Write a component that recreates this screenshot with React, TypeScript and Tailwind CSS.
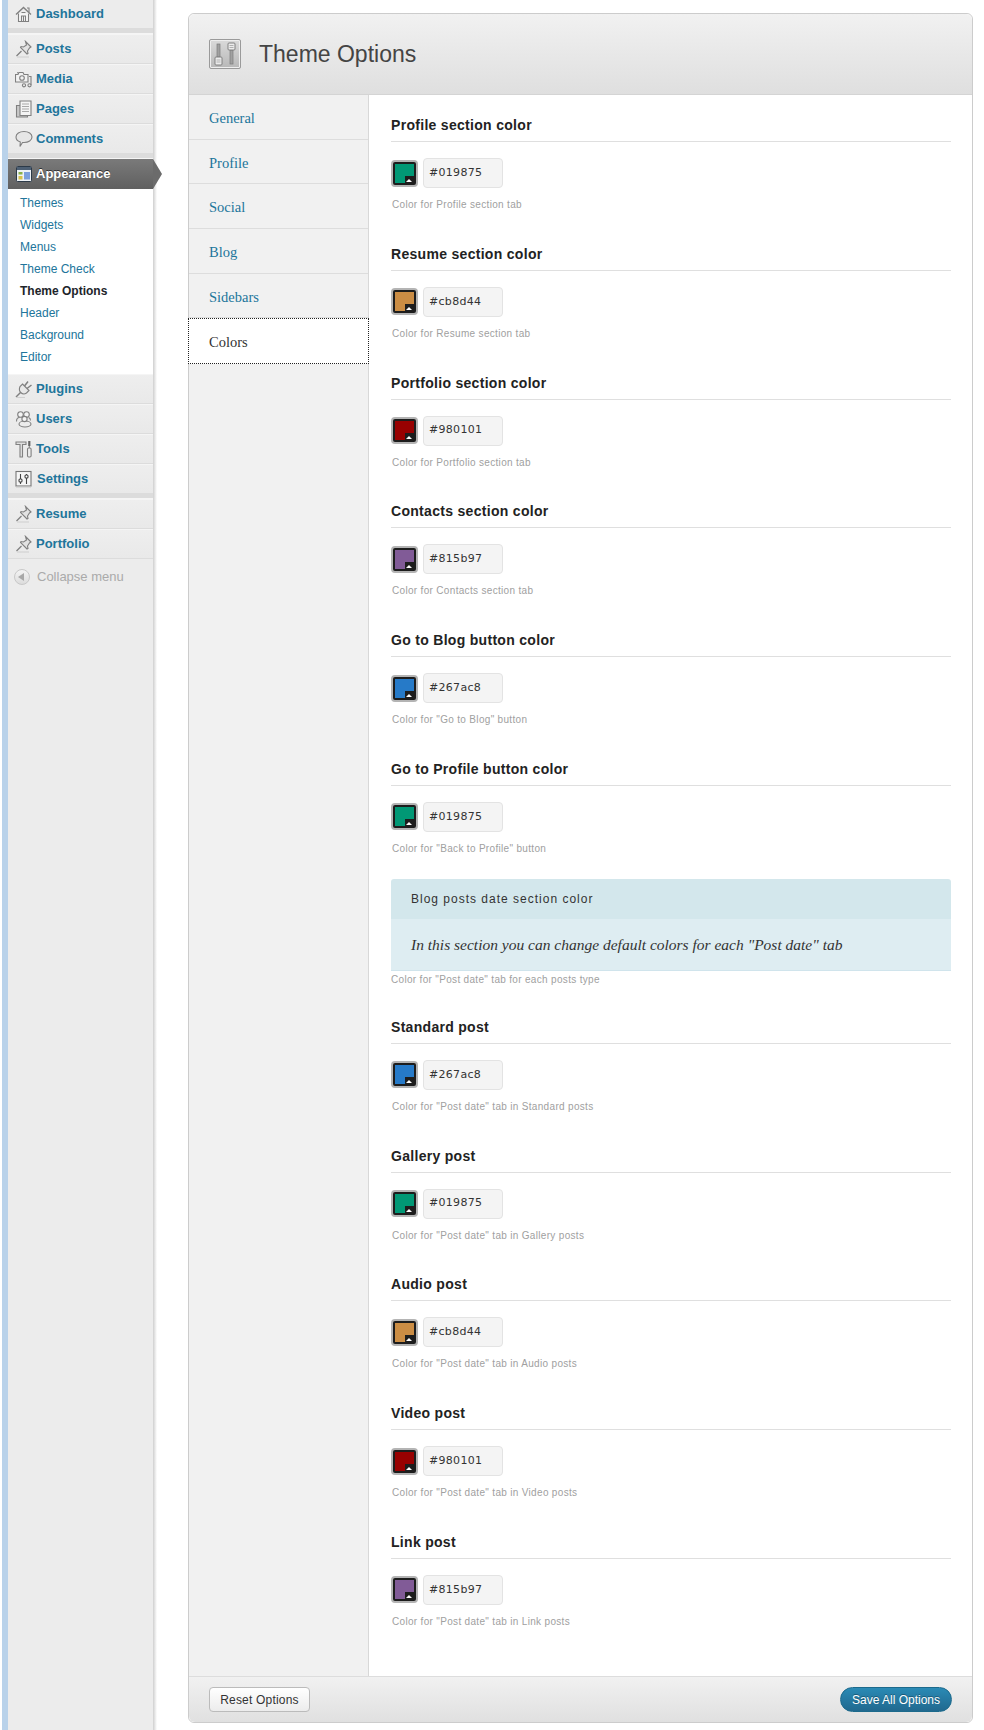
import React from 'react';

const sans = 'font-["Liberation_Sans",Arial,sans-serif]';

const Icon: React.FC<{ name: string }> = ({ name }) => {
  const common = { width: 18, height: 18, viewBox: '0 0 18 18', fill: 'none', stroke: '#808080', strokeWidth: 1.1 };
  switch (name) {
    case 'home':
      return (
        <svg {...common}>
          <path d="M1 9.500 8.500 2.500l7.500 7" strokeWidth="1.400" />
          <path d="M3.500 8.500v8h10v-8" fill="#f6f6f6" />
          <path d="M6.500 16.500V11h4v5.500M8.500 11v5.500M6.500 7.500h4" />
          <path d="M12 3h2v4" />
        </svg>
      );
    case 'pin':
      return (
        <svg {...common}>
          <path d="M10.500 1.500l5.500 5.500-1.500 1-2 3 .5 2.500-1 .5-6.500-6.500.5-1 2.500.5 3-2z" fill="#e2e2e2" />
          <path d="M6.500 11 1.500 16" strokeWidth="1.300" />
          <path d="M2 17h12" stroke="#d0d0d0" />
        </svg>
      );
    case 'media':
      return (
        <svg {...common}>
          <path d="M.5 4.500h2.500l1-2h4l1 2h4v7.500h-12.500z" fill="#f2f2f2" />
          <path d="M2 2.800h1.500" />
          <circle cx="7" cy="8" r="2.300" />
          <circle cx="9" cy="15.300" r="1.600" />
          <circle cx="14.500" cy="15.300" r="1.600" />
          <path d="M16 15V6.500h-2" />
        </svg>
      );
    case 'pages':
      return (
        <svg {...common}>
          <path d="M1.500 5.500h4v10h7v1.500h-11z" fill="#c8c8c8" />
          <path d="M5 1h11v14.500H5z" fill="#f4f4f4" />
          <path d="M7 4h7M7 6.500h7M7 9h7M7 11.500h7" stroke="#a8a8a8" />
        </svg>
      );
    case 'comment':
      return (
        <svg {...common}>
          <path d="M9 1.500c4.500 0 8 2.300 8 5.500s-3.500 5.500-8 5.500H7.500l-2.500 4 .3-4.500C2.800 11.200 1 9.300 1 7c0-3.200 3.500-5.500 8-5.500z" fill="#e6e6e6" />
        </svg>
      );
    case 'appearance':
      return (
        <svg width="16" height="16" viewBox="0 0 16 16">
          <rect x=".5" y=".5" width="15" height="15" rx="1" fill="#eef2f6" stroke="#2c3a48" />
          <rect x="1" y="1" width="14" height="3" fill="#4d5f73" />
          <rect x="2.500" y="6" width="4" height="2.500" fill="#8ab04a" />
          <rect x="2.500" y="10" width="4" height="3.500" fill="#d8c24c" />
          <rect x="8" y="6" width="6" height="7.500" fill="#7c9fdc" />
        </svg>
      );
    case 'plugin':
      return (
        <svg {...common}>
          <path d="M7.500 4 14 10.500l-2.500 2.500c-2 1.500-4.300 1-5.800-.5S4 9 5 6.500z" fill="#e8e8e8" />
          <path d="M9.500 6 13 1.500M12 8.500l4.500-3.500" strokeWidth="1.500" />
          <path d="M5.500 12.500 1 17" strokeWidth="1.400" />
          <path d="M1 17.500h9" stroke="#d0d0d0" />
        </svg>
      );
    case 'users':
      return (
        <svg {...common}>
          <circle cx="5.500" cy="4.500" r="2.800" fill="#f4f4f4" />
          <circle cx="11.500" cy="4.500" r="2.800" fill="#f4f4f4" />
          <path d="M1.500 11.500c0-2.500 1.500-4 3-4M15.500 10.500c0-1.500-.7-2.500-1.800-3" />
          <ellipse cx="10" cy="14" rx="6" ry="3" fill="#ececec" />
          <circle cx="9.500" cy="9" r="2.600" fill="#f4f4f4" />
        </svg>
      );
    case 'tools':
      return (
        <svg {...common}>
          <path d="M1 2h10v2.500H7.500V17h-2.500V4.500H1z" fill="#e0e0e0" />
          <path d="M14.300 1v5" strokeWidth="2.200" stroke="#666" />
          <path d="M14.300 6v2" stroke="#888" />
          <rect x="12.500" y="8" width="3.600" height="9" rx="1.200" fill="#ececec" />
        </svg>
      );
    case 'settings':
      return (
        <svg {...common}>
          <rect x="1" y="1.500" width="15" height="14.500" fill="#f6f6f6" stroke="#777" />
          <path d="M1 17h15" stroke="#c8c8c8" />
          <path d="M5.500 4v5M5.500 12v2M11.500 4v1M11.500 8v6" stroke="#444" />
          <rect x="4" y="9" width="3" height="3" rx="1" fill="#fff" stroke="#444" />
          <rect x="10" y="5" width="3" height="3" rx="1" fill="#fff" stroke="#444" />
        </svg>
      );
    default:
      return null;
  }
};

const MenuRow: React.FC<{ label: string; icon: string }> = ({ label, icon }) => (
  <div className="flex h-[30px] items-center border-t border-t-[#f5f5f5] border-b border-b-[#dcdcdc] bg-gradient-to-b from-[#eeeeee] to-[#e9e9e9] pl-[7px] text-[13px] font-bold text-[#21759b]">
    <span className={`flex shrink-0 items-center ${icon === 'settings' ? 'w-[22px]' : 'w-[21px]'}`}><Icon name={icon} /></span>
    <span>{label}</span>
  </div>
);

const Separator = () => <div className="h-[5px] border-b border-b-[#f5f5f5] bg-[#dcdcdc]" />;

const subItems = ['Themes', 'Widgets', 'Menus', 'Theme Check', 'Theme Options', 'Header', 'Background', 'Editor'];

const Sidebar = () => (
  <aside className={`${sans} relative flex w-[153px] shrink-0 flex-col border-l-2 border-l-white`}>
    <div className="flex h-full">
      <div className="w-[6px] shrink-0 bg-[#b9d2ea]" />
      <div className="w-[145px] shrink-0 bg-[#ececec]">
        <div className="flex h-[29px] items-center border-b border-b-[#dcdcdc] pl-[7px] text-[13px] font-bold text-[#21759b]">
          <span className="flex w-[21px] shrink-0 items-center"><Icon name="home" /></span>
          <span>Dashboard</span>
        </div>
        <Separator />
        <MenuRow label="Posts" icon="pin" />
        <MenuRow label="Media" icon="media" />
        <MenuRow label="Pages" icon="pages" />
        <MenuRow label="Comments" icon="comment" />
        <Separator />
        <div className="relative flex h-[30px] items-center bg-gradient-to-b from-[#7a7a7a] to-[#606060] pl-[8px] text-[13px] font-bold text-white [text-shadow:0_-1px_0_#333]">
          <span className="flex w-[20px] shrink-0 items-center"><Icon name="appearance" /></span>
          <span>Appearance</span>
          <span className="absolute left-full top-0 z-10 h-0 w-0 border-y-[15px] border-l-[9px] border-y-transparent border-l-[#6b6b6b]" />
        </div>
        <div className="flex h-[185px] flex-col bg-white pt-[3px] text-[12px] text-[#21759b]">
          {subItems.map((s) => (
            <div key={s} className={`flex h-[22px] shrink-0 items-center pl-[12px] ${s === 'Theme Options' ? 'font-bold text-[#21242a]' : ''}`}>
              {s}
            </div>
          ))}
        </div>
        <MenuRow label="Plugins" icon="plugin" />
        <MenuRow label="Users" icon="users" />
        <MenuRow label="Tools" icon="tools" />
        <MenuRow label="Settings" icon="settings" />
        <Separator />
        <MenuRow label="Resume" icon="pin" />
        <MenuRow label="Portfolio" icon="pin" />
        <div className="flex h-[35px] items-center pl-[6px] text-[13px] text-[#aaaaaa]">
          <span className="mr-[7px] flex h-[16px] w-[16px] items-center justify-center rounded-full border border-[#c8c8c8] bg-gradient-to-b from-[#f4f4f4] to-[#dcdcdc]">
            <span className="mr-[2px] h-0 w-0 border-y-[4px] border-r-[6px] border-y-transparent border-r-[#a8a8a8]" />
          </span>
          Collapse menu
        </div>
      </div>
    </div>
    <div className="absolute left-full top-0 h-full w-[4px] bg-gradient-to-r from-[#cfcfcf] to-white" />
  </aside>
);

const tabs = ['General', 'Profile', 'Social', 'Blog', 'Sidebars'];

type Field = { title: string; color: string; hint: string };

const topFields: Field[] = [
  { title: 'Profile section color', color: '#019875', hint: 'Color for Profile section tab' },
  { title: 'Resume section color', color: '#cb8d44', hint: 'Color for Resume section tab' },
  { title: 'Portfolio section color', color: '#980101', hint: 'Color for Portfolio section tab' },
  { title: 'Contacts section color', color: '#815b97', hint: 'Color for Contacts section tab' },
  { title: 'Go to Blog button color', color: '#267ac8', hint: 'Color for "Go to Blog" button' },
  { title: 'Go to Profile button color', color: '#019875', hint: 'Color for "Back to Profile" button' },
];

const postFields: Field[] = [
  { title: 'Standard post', color: '#267ac8', hint: 'Color for "Post date" tab in Standard posts' },
  { title: 'Gallery post', color: '#019875', hint: 'Color for "Post date" tab in Gallery posts' },
  { title: 'Audio post', color: '#cb8d44', hint: 'Color for "Post date" tab in Audio posts' },
  { title: 'Video post', color: '#980101', hint: 'Color for "Post date" tab in Video posts' },
  { title: 'Link post', color: '#815b97', hint: 'Color for "Post date" tab in Link posts' },
];

const ColorField: React.FC<Field> = ({ title, color, hint }) => (
  <div className="h-[128.8px]">
    <h4 className={`${sans} h-[25px] border-b border-b-[#dfdfdf] text-[14px] leading-[16px] font-bold tracking-[0.3px] text-[#222222]`}>{title}</h4>
    <div className="mt-[16px] flex items-center">
      <div className="relative h-[27px] w-[27px] rounded-[4px] border-2 border-[#b4b4b4] bg-[#1d1d1d]">
        <div className="ml-[2px] mt-[2px] h-[19px] w-[19px]" style={{ backgroundColor: color }} />
        <div className="absolute bottom-[2px] right-[2px] h-[7px] w-[9px] bg-[#1d1d1d]" />
        <div className="absolute bottom-[3px] right-[4px] h-0 w-0 border-x-[3px] border-b-[3px] border-x-transparent border-b-white" />
      </div>
      <div className="ml-[5px] flex h-[30px] w-[80px] items-center rounded-[4px] border border-[#e3e3e3] bg-[#f4f4f4] pl-[5px] font-['DejaVu_Sans',sans-serif] text-[11px] tracking-[0.3px] text-[#333333]">
        {color}
      </div>
    </div>
    <p className={`${sans} mt-[10px] pl-px text-[10px] leading-[14px] tracking-[0.32px] text-[#a0a0a0]`}>{hint}</p>
  </div>
);

const Panel = () => (
  <section className="ml-[35px] mt-[13px] flex h-[1710px] w-[785px] flex-col rounded-[6px] border border-[#cccccc]">
    <header className="flex h-[81px] shrink-0 items-center rounded-t-[6px] border-b border-b-[#d4d4d4] bg-gradient-to-b from-[#f1f1f1] to-[#dfdfdf] pl-[20px]">
      <div className="h-[30px] w-[32px] overflow-hidden rounded-[2px] border border-[#9a9a9a] bg-gradient-to-b from-[#dadada] to-[#b8b8b8] shadow-[inset_0_0_0_1px_#eeeeee]">
        <svg width="30" height="28" viewBox="0 0 30 28" fill="none">
          <rect x="7" y="4" width="3" height="13" fill="#a0a0a0" stroke="#7c7c7c" strokeWidth=".7" />
          <rect x="5" y="17" width="7" height="8" rx="1" fill="#ececec" stroke="#808080" />
          <path d="M6.500 20h4M6.500 22h4" stroke="#b0b0b0" />
          <rect x="20" y="10" width="3" height="14" fill="#a0a0a0" stroke="#7c7c7c" strokeWidth=".7" />
          <rect x="18" y="3" width="7" height="7" rx="1" fill="#ececec" stroke="#808080" />
          <path d="M19.500 5.500h4M19.500 7.500h4" stroke="#b0b0b0" />
        </svg>
      </div>
      <h1 className={`${sans} ml-[18px] pt-[1px] text-[23px] font-normal text-[#444444]`}>Theme Options</h1>
    </header>

    <div className="flex min-h-0 flex-1">
      <nav className="w-[180px] shrink-0 border-r border-r-[#d8d8d8] bg-[#f1f1f1] font-['Liberation_Serif',Georgia,serif] text-[14.5px]">
        {tabs.map((t) => (
          <div key={t} className="flex h-[44.700px] items-center border-b border-b-[#dddddd] pl-[20px] pt-[4px] text-[#21759b]">
            {t}
          </div>
        ))}
        <div className="-ml-px -mr-px flex h-[46px] items-center border border-dotted border-[#222222] bg-white pl-[20px] pt-[2px] text-[#333333]">
          Colors
        </div>
      </nav>

      <div className="min-w-0 flex-1 pl-[22px] pr-[21px] pt-[22px]">
        {topFields.map((f) => <ColorField key={f.title} {...f} />)}
        <div className="-mt-[11px] border-b border-b-[#d0e4ec]">
          <div className={`${sans} flex h-[40px] items-center rounded-t-[3px] bg-[#d3e7ec] pl-[20px] text-[12px] tracking-[1px] text-[#333333]`}>
            Blog posts date section color
          </div>
          <div className="flex h-[51px] items-center bg-[#deedf2] pl-[20px] font-['Liberation_Serif',Georgia,serif] text-[15.5px] italic text-[#333333]">
            In this section you can change default colors for each "Post date" tab
          </div>
        </div>
        <p className={`${sans} mb-[32px] mt-[2px] text-[10px] leading-[14px] tracking-[0.32px] text-[#a0a0a0]`}>Color for "Post date" tab for each posts type</p>
        {postFields.map((f) => <ColorField key={f.title} {...f} />)}
      </div>
    </div>

    <footer className={`${sans} flex h-[46px] shrink-0 items-center justify-between rounded-b-[6px] border-t border-t-[#dddddd] bg-gradient-to-b from-[#f1f1f1] to-[#e0e0e0] pl-[20px] pr-[20px]`}>
      <button className="h-[25px] w-[101px] rounded-[4px] border border-[#bbbbbb] bg-gradient-to-b from-white to-[#ececec] text-[12px] tracking-[0.2px] text-[#333333]">
        Reset Options
      </button>
      <button className="h-[25px] w-[112px] rounded-full border border-[#1c6a8c] bg-gradient-to-b from-[#2a8ab5] to-[#21698f] text-[12px] text-white [text-shadow:0_-1px_0_#1a5a78]">
        Save All Options
      </button>
    </footer>
  </section>
);

export default function App() {
  return (
    <div className="flex h-[1730px] w-[984px] overflow-hidden bg-white">
      <Sidebar />
      <Panel />
    </div>
  );
}
